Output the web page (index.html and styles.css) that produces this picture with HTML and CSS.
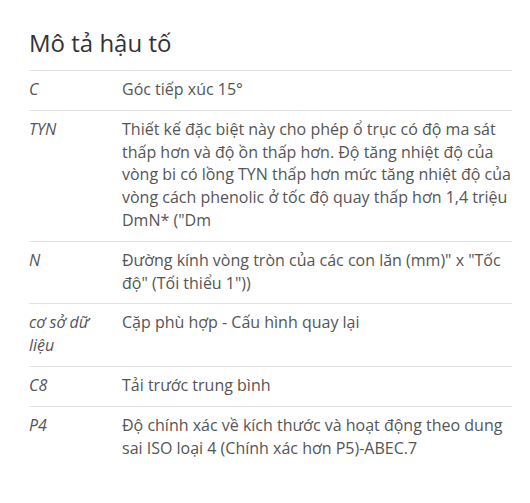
FILE: index.html
```html
<!DOCTYPE html>
<html lang="vi">
<head>
    <meta charset="UTF-8">
    <meta name="viewport" content="width=device-width, initial-scale=1.0">
    <title>Mô tả hậu tố</title>
    <link rel="stylesheet" href="styles.css">
</head>
<body>
    <div class="suffix-box">
        <h2>Mô tả hậu tố</h2>
        <table class="suffix-table">
            <tbody>
                <tr>
                    <td class="code">C</td>
                    <td>Góc tiếp xúc 15°</td>
                </tr>
                <tr>
                    <td class="code">TYN</td>
                    <td>Thiết kế đặc biệt này cho phép ổ trục có độ ma sát thấp hơn và độ ồn thấp hơn. Độ tăng nhiệt độ của vòng bi có lồng TYN thấp hơn mức tăng nhiệt độ của vòng cách phenolic ở tốc độ quay thấp hơn 1,4 triệu DmN* ("Dm</td>
                </tr>
                <tr>
                    <td class="code">N</td>
                    <td>Đường kính vòng tròn của các con lăn (mm)" x "Tốc độ" (Tối thiểu 1"))</td>
                </tr>
                <tr>
                    <td class="code">cơ sở dữ liệu</td>
                    <td>Cặp phù hợp - Cấu hình quay lại</td>
                </tr>
                <tr>
                    <td class="code">C8</td>
                    <td>Tải trước trung bình</td>
                </tr>
                <tr>
                    <td class="code">P4</td>
                    <td>Độ chính xác về kích thước và hoạt động theo dung sai ISO loại 4 (Chính xác hơn P5)-ABEC.7</td>
                </tr>
            </tbody>
        </table>
    </div>
</body>
</html>
```

FILE: styles.css
```css
body {
    font-family: "Open Sans", Arial, sans-serif;
    margin: 0;
    background-color: #fff;
    color: #555;
}
.suffix-box {
    width: 483px;
    margin-left: 29px;
    padding-top: 26px;
}
h2 {
    font-size: 24px;
    font-weight: normal;
    line-height: 33px;
    color: #333;
    margin: 0 0 11px 0;
}
.suffix-table {
    width: 100%;
    border-collapse: collapse;
    font-size: 16px;
    line-height: 22.8px;
}
.suffix-table td {
    border-top: 1px solid #e2e2e2;
    padding: 7px 0 9px 0;
    vertical-align: top;
    text-align: left;
}
.suffix-table td.code {
    width: 93px;
    padding-right: 10px;
    box-sizing: border-box;
    font-style: italic;
}
```
